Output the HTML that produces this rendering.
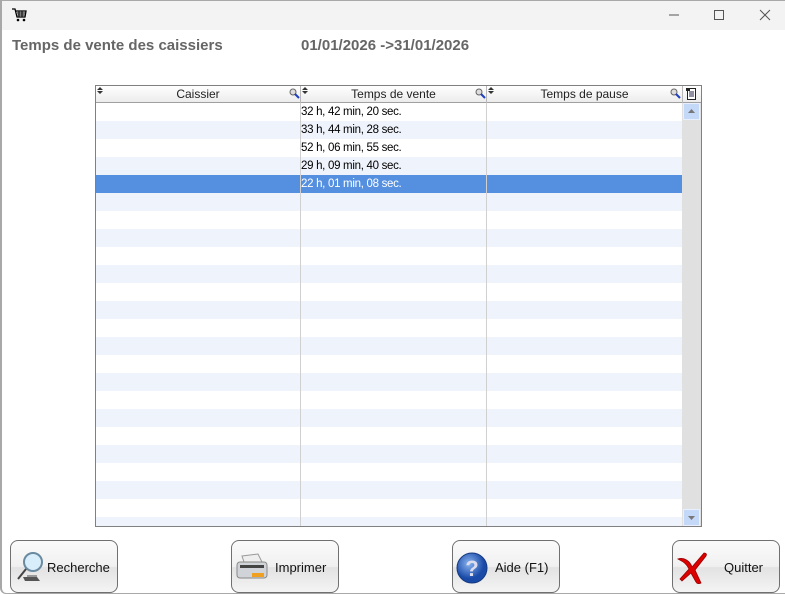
<!DOCTYPE html>
<html><head><meta charset="utf-8"><style>
*{margin:0;padding:0;box-sizing:border-box}
body{width:785px;height:594px;overflow:hidden;background:#fff;font-family:"Liberation Sans",Arial,sans-serif;position:relative}
.frame{position:absolute;left:0;top:0;width:785px;height:594px;border-left:2px solid #a8a8a8;border-top:1px solid #a8a8a8;border-bottom:1px solid #a8a8a8;border-radius:0 0 0 6px}
.title{position:absolute;left:2px;top:1px;right:0;height:29px;background:#f3f3f3}
.h1{position:absolute;top:37px;font-size:15px;font-weight:bold;color:#666}
.grid{position:absolute;left:95px;top:85px;width:607px;height:442px;border:1px solid #808080;background:#fff;overflow:hidden}
.hdr{position:absolute;left:0;top:0;height:17px;width:605px;background:linear-gradient(#fff,#ececec);border-bottom:1px solid #a0a0a0;font-size:12px;color:#222}
.hc{position:absolute;top:0;height:17px;line-height:17px;text-align:center;border-right:1px solid #b8b8b8}
.rows{position:absolute;left:0;top:17px;width:586px;height:423px;overflow:hidden}
.r{height:18px;font-size:11.5px;line-height:19px;position:relative}
.r:nth-child(even){background:#eff4fc}
.r span{position:absolute;left:205px;letter-spacing:-0.3px}
.sel{background:#5590e0!important;color:#fff}
.vl{position:absolute;top:17px;bottom:0;width:1px;background:#d0d0d0}
.sb{position:absolute;left:586px;top:17px;width:19px;height:423px;background:#e0e0e0}
.sbb{position:absolute;left:1px;width:17px;height:17px;background:#c4d8f8;border:1px solid #e8f0ff}
.btn{position:absolute;top:540px;width:108px;height:53px;border:1px solid #707070;border-radius:8px;background:linear-gradient(#fbfbfb 0%,#f0f0f0 50%,#e2e2e2 52%,#f4f4f4 100%);font-size:13px;color:#111}
.btn .t{position:absolute;top:19px}
</style></head><body>
<div class="title"></div>
<svg style="position:absolute;left:12px;top:8px" width="15" height="14" viewBox="0 0 15 14"><path d="M0 1h3l2 8h8l1-6H4" fill="none" stroke="#000" stroke-width="1.3"/><path d="M5 5h8M5.5 7h7M7 3v6M10 3v6" stroke="#000" stroke-width="1"/><circle cx="6" cy="12" r="1.3"/><circle cx="12" cy="12" r="1.3"/></svg>
<svg style="position:absolute;left:667px;top:8px" width="110" height="14"><path d="M2 7h10" stroke="#555"/><rect x="47.5" y="2.5" width="9" height="9" fill="none" stroke="#555"/><path d="M93 2l10 10M103 2l-10 10" stroke="#555"/></svg>
<div class="h1" style="left:12px">Temps de vente des caissiers</div>
<div class="h1" style="left:301px">01/01/2026 -&gt;31/01/2026</div>
<div class="grid">
<div class="hdr">
<div class="hc" style="left:0;width:205px">Caissier</div>
<div class="hc" style="left:205px;width:186px">Temps de vente</div>
<div class="hc" style="left:391px;width:196px">Temps de pause</div>
<svg style="position:absolute;left:1px;top:1px" width="6" height="7"><path d="M0 3L3 0L6 3zM0 4L3 7L6 4z" fill="#333"/></svg>
<svg style="position:absolute;left:206px;top:1px" width="6" height="7"><path d="M0 3L3 0L6 3zM0 4L3 7L6 4z" fill="#333"/></svg>
<svg style="position:absolute;left:392px;top:1px" width="6" height="7"><path d="M0 3L3 0L6 3zM0 4L3 7L6 4z" fill="#333"/></svg>
<svg style="position:absolute;left:193px;top:2px" width="11" height="11"><circle cx="4" cy="4" r="3" fill="#ddd" stroke="#666"/><path d="M6 6l4 4" stroke="#2040c0" stroke-width="2"/></svg>
<svg style="position:absolute;left:379px;top:2px" width="11" height="11"><circle cx="4" cy="4" r="3" fill="#ddd" stroke="#666"/><path d="M6 6l4 4" stroke="#2040c0" stroke-width="2"/></svg>
<svg style="position:absolute;left:574px;top:2px" width="11" height="11"><circle cx="4" cy="4" r="3" fill="#ddd" stroke="#666"/><path d="M6 6l4 4" stroke="#2040c0" stroke-width="2"/></svg>
<svg style="position:absolute;left:589px;top:1px" width="12" height="14"><rect x="2.5" y="1.5" width="8" height="11" fill="#fff" stroke="#222"/><path d="M4 5h5M4 7h5M4 9h5" stroke="#224"/><rect x="1" y="1" width="4" height="3" fill="#222"/></svg>
</div>
<div class="rows">
<div class="r"><span>32 h, 42 min, 20 sec.</span></div>
<div class="r"><span>33 h, 44 min, 28 sec.</span></div>
<div class="r"><span>52 h, 06 min, 55 sec.</span></div>
<div class="r"><span>29 h, 09 min, 40 sec.</span></div>
<div class="r sel"><span>22 h, 01 min, 08 sec.</span></div>
<div class="r"></div><div class="r"></div><div class="r"></div><div class="r"></div><div class="r"></div>
<div class="r"></div><div class="r"></div><div class="r"></div><div class="r"></div><div class="r"></div>
<div class="r"></div><div class="r"></div><div class="r"></div><div class="r"></div><div class="r"></div>
<div class="r"></div><div class="r"></div><div class="r"></div><div class="r"></div>
</div>
<div class="vl" style="left:204px"></div>
<div class="vl" style="left:390px"></div>
<div class="sb">
<div class="sbb" style="top:0"><svg width="15" height="15"><path d="M4 9l3.5-4 3.5 4z" fill="#777"/></svg></div>
<div class="sbb" style="bottom:0"><svg width="15" height="15"><path d="M4 6l3.5 4 3.5-4z" fill="#777"/></svg></div>
</div>
</div>
<div class="btn" style="left:10px"><svg style="position:absolute;left:4px;top:10px" width="34" height="34"><circle cx="18" cy="11" r="9" fill="#d8eefa" stroke="#6a8aa0" stroke-width="2"/><path d="M11 18L3 28" stroke="#444" stroke-width="2"/><path d="M8 26h14l3 4H10z" fill="#555"/><path d="M12 24h10v2H12z" fill="#999"/></svg><span class="t" style="left:36px">Recherche</span></div>
<div class="btn" style="left:231px"><svg style="position:absolute;left:2px;top:11px" width="36" height="32"><path d="M8 4l16-2 4 8H10z" fill="#eee" stroke="#999"/><rect x="3" y="10" width="30" height="16" rx="3" fill="#d0d4d8" stroke="#888"/><rect x="6" y="13" width="24" height="3" fill="#444"/><path d="M18 21h12v4H18z" fill="#f0a020"/></svg><span class="t" style="left:43px">Imprimer</span></div>
<div class="btn" style="left:452px"><svg style="position:absolute;left:2px;top:10px" width="34" height="34"><defs><radialGradient id="g" cx="0.4" cy="0.35"><stop offset="0" stop-color="#8ab4f0"/><stop offset="1" stop-color="#1a4aa8"/></radialGradient></defs><circle cx="17" cy="17" r="15" fill="url(#g)" stroke="#153a80"/><text x="17" y="25" text-anchor="middle" font-size="22" font-weight="bold" fill="#dde" font-family="Liberation Sans">?</text></svg><span class="t" style="left:42px">Aide (F1)</span></div>
<div class="btn" style="left:672px"><svg style="position:absolute;left:3px;top:10px" width="34" height="34"><path d="M2 8C8 6 14 10 16 16L28 2c2 0 3 1 2 3L19 19l6 13c-2 1-4 1-5-1l-5-9L6 30 4 28l9-10C10 12 6 10 2 8z" fill="#d00" stroke="#900" stroke-width=".8"/></svg><span class="t" style="left:51px">Quitter</span></div>
<div class="frame"></div>
</body></html>
